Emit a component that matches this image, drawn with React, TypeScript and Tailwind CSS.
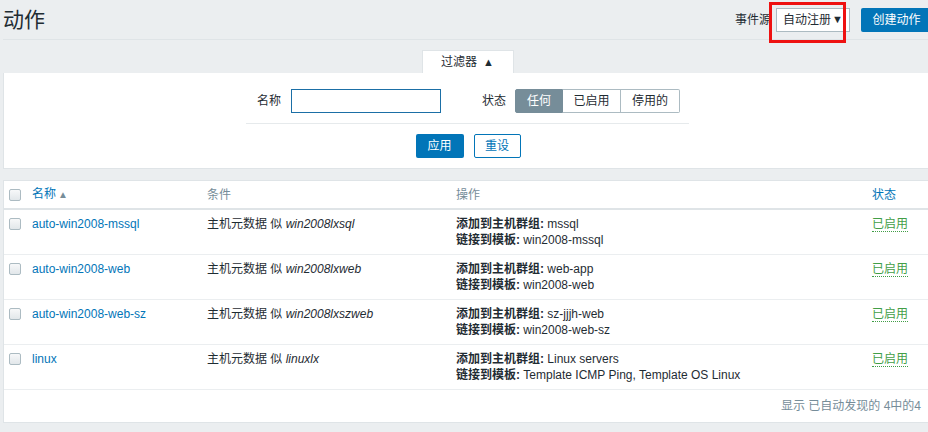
import React from 'react';

const font = { fontFamily: '"Liberation Sans", Arial, "Noto Sans CJK SC", sans-serif' };

type Row = {
  name: string;
  cond: string;
  group: string;
  template: string;
};

const rows: Row[] = [
  { name: 'auto-win2008-mssql', cond: 'win2008lxsql', group: 'mssql', template: 'win2008-mssql' },
  { name: 'auto-win2008-web', cond: 'win2008lxweb', group: 'web-app', template: 'win2008-web' },
  { name: 'auto-win2008-web-sz', cond: 'win2008lxszweb', group: 'sz-jjjh-web', template: 'win2008-web-sz' },
  { name: 'linux', cond: 'linuxlx', group: 'Linux servers', template: 'Template ICMP Ping, Template OS Linux' },
];

const Checkbox: React.FC = () => (
  <span className="block w-[12px] h-[12px] rounded-[2px] border border-[#acbbc2] bg-gradient-to-b from-[#f7f8f9] to-[#e2e7ea]" />
);

const cols = 'grid grid-cols-[23px_175px_249px_416px_1fr]';

const App: React.FC = () => {
  return (
    <div className="w-full h-[432px] overflow-hidden bg-[#ebeef0] text-[12px] leading-4 text-[#1f2c33]" style={font}>
      <div className="w-[936px] pl-[3px] pr-1">
        {/* header */}
        <div className="h-[40px] flex items-center justify-between border-b border-[#dfe4e7]">
          <h1 className="text-[21px] font-normal leading-6">动作</h1>
          <div className="flex items-center">
            <span className="mr-[5px]">事件源</span>
            <div className="relative">
              <div className="w-[74px] h-[24px] bg-white border border-[#acbbc2] flex items-center justify-between pl-[6px] pr-[6px]">
                <span>自动注册</span>
                <span className="text-[11px] leading-none">▼</span>
              </div>
              <div className="absolute left-[-7px] top-[-6px] w-[77px] h-[41px] border-[3px] border-[#ee1111]" />
            </div>
            <button className="ml-[11px] h-[24px] w-[71px] rounded-[2px] bg-[#0275b8] text-white">创建动作</button>
          </div>
        </div>

        {/* filter tab */}
        <div className="mt-[10px] flex justify-center">
          <div className="w-[92px] h-[23px] bg-white border border-b-0 border-[#dfe4e7] flex items-center justify-center gap-[6px]">
            <span>过滤器</span>
            <span className="text-[11px] leading-none">▲</span>
          </div>
        </div>

        {/* filter panel */}
        <div className="bg-white border border-t-0 border-[#dfe4e7] pt-[16px] pb-[10px]">
          <div className="w-[443px] mx-auto">
            <div className="flex items-center pl-[11px]">
              <span>名称</span>
              <div className="ml-[10px] w-[150px] h-[24px] border border-[#1b6fa6] bg-white" />
              <span className="ml-[41px]">状态</span>
              <div className="ml-[9px] flex h-[24px]">
                <span className="w-[48px] flex items-center justify-center bg-[#768d99] text-white border border-[#768d99] rounded-l-[2px]">任何</span>
                <span className="w-[58px] flex items-center justify-center border border-l-0 border-[#acbbc2]">已启用</span>
                <span className="w-[59px] flex items-center justify-center border border-l-0 border-[#acbbc2] rounded-r-[2px]">停用的</span>
              </div>
            </div>
            <div className="mt-[10px] border-t border-[#e6eaec]" />
            <div className="mt-[10px] flex justify-center gap-[10px] pl-[1px]">
              <button className="w-[48px] h-[24px] rounded-[2px] bg-[#0275b8] text-white">应用</button>
              <button className="w-[47px] h-[24px] rounded-[2px] bg-white border border-[#0275b8] text-[#0275b8]">重设</button>
            </div>
          </div>
        </div>

        {/* table */}
        <div className="mt-[11px] bg-white border border-[#dfe4e7]">
          <div className={`${cols} h-[29px] items-center border-b-2 border-[#dfe4e7]`}>
            <div className="pl-[5px]"><Checkbox /></div>
            <div className="pl-[5px] text-[#0275b8]">
              名称<span className="text-[#768d99] text-[10px] ml-[2px]">▲</span>
            </div>
            <div className="pl-[5px] text-[#768d99]">条件</div>
            <div className="pl-[5px] text-[#768d99]">操作</div>
            <div className="pl-[5px] text-[#0275b8]">状态</div>
          </div>
          {rows.map((r) => (
            <div key={r.name} className={`${cols} py-[6px] border-b border-[#ebeef0]`}>
              <div className="pl-[5px] pt-[2px]"><Checkbox /></div>
              <div className="pl-[5px] text-[#0275b8]">{r.name}</div>
              <div className="pl-[5px]">
                主机元数据 似 <i>{r.cond}</i>
              </div>
              <div className="pl-[5px]">
                <div><b>添加到主机群组:</b> {r.group}</div>
                <div><b>链接到模板:</b> {r.template}</div>
              </div>
              <div className="pl-[5px]">
                <span className="text-[#429e47] border-b border-dotted border-[#429e47]">已启用</span>
              </div>
            </div>
          ))}
          <div className="h-[32px] flex items-center justify-end pr-[10px] text-[#768d99]">
            显示 已自动发现的 4中的4
          </div>
        </div>
      </div>
    </div>
  );
};

export default App;
